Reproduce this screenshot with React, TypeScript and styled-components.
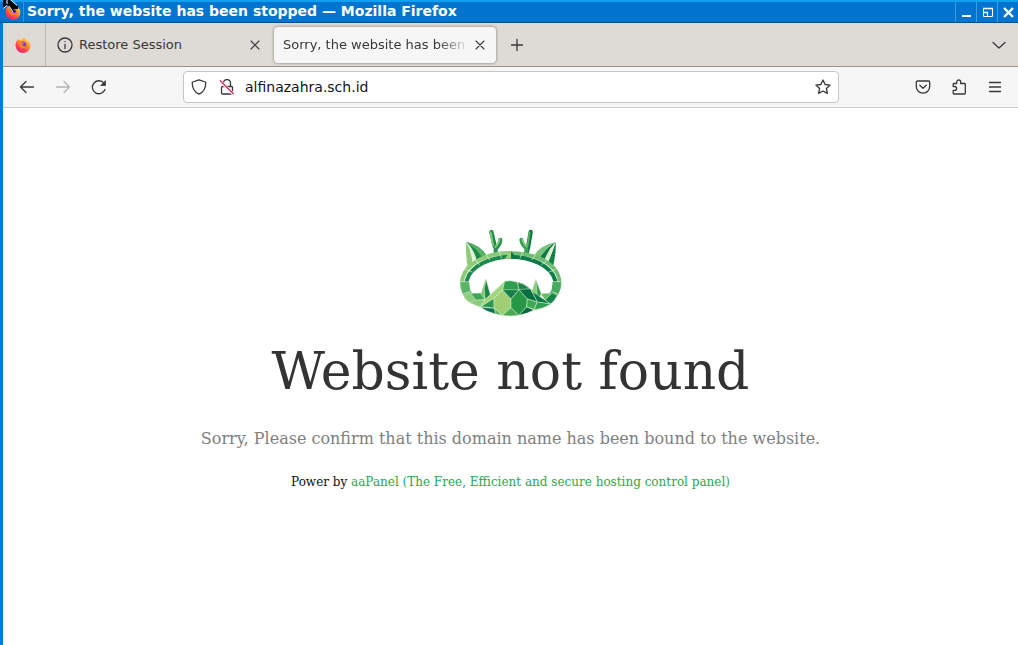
import React from "react";
import styled, { createGlobalStyle } from "styled-components";

const Global = createGlobalStyle`
  * { box-sizing: border-box; }
  body { margin: 0; background: #fff; }
  button { border: 0; padding: 0; background: none; color: inherit; font: inherit; }
  svg { display: block; flex: none; }
`;

const Window = styled.div`
  display: flex;
  flex-direction: column;
  min-height: 100vh;
  font-family: "DejaVu Sans", sans-serif;
  font-size: 14px;
  color: #38373b;
`;

const TitleBar = styled.header`
  display: flex;
  align-items: stretch;
  height: 23px;
  color: #fff;
  background: #0074cf;
  border-top: 2px solid #10a0f0;
  border-bottom: 1px solid #004f93;
`;

const TitleIcon = styled.div`
  display: flex;
  align-items: center;
  justify-content: center;
  width: 24px;
  padding-left: 2px;
  border-right: 1px solid #2b97e0;
`;

const Title = styled.h1`
  flex: 1;
  margin: 0;
  padding-left: 3px;
  font-size: 14px;
  line-height: 18px;
  font-weight: bold;
  font-stretch: normal;
  white-space: nowrap;
  overflow: hidden;
`;

const WindowButton = styled.button`
  display: flex;
  align-items: center;
  justify-content: center;
  width: 21px;
  padding-top: 1px;
  border-left: 1px solid #3d9fe2;
`;

const Frame = styled.div`
  flex: 1;
  display: flex;
  flex-direction: column;
  border-left: 3px solid #0a7ad3;
`;

const TabStrip = styled.div`
  display: flex;
  align-items: center;
  height: 44px;
  padding-right: 1px;
  background: #dedad6;
  border-bottom: 1px solid #9c948c;
`;

const Pinned = styled.div`
  display: flex;
  align-items: center;
  justify-content: center;
  align-self: stretch;
  width: 43px;
  padding-right: 3px;
  border-right: 1px solid #bdb8b3;
`;

const Tab = styled.div<{ $active?: boolean }>`
  display: flex;
  align-items: center;
  gap: ${(p) => (p.$active ? 2 : 6)}px;
  width: ${(p) => (p.$active ? 222 : 228)}px;
  height: 36px;
  padding: ${(p) => (p.$active ? "0 8px 0 9px" : "0 11px")};
  border-radius: 4px;
  background: ${(p) => (p.$active ? "#f6f6f6" : "transparent")};
  box-shadow: ${(p) => (p.$active ? "0 0 3px #77716c" : "none")};
`;

const TabLabel = styled.span<{ $fade?: boolean }>`
  flex: 1;
  min-width: 0;
  overflow: hidden;
  white-space: nowrap;
  font-size: 13px;
  line-height: 20px;
  mask-image: ${(p) =>
    p.$fade ? "linear-gradient(to left, transparent, #000 32px)" : "none"};
`;

const IconButton = styled.button<{ $size?: number; $dim?: boolean }>`
  display: flex;
  align-items: center;
  justify-content: center;
  flex: none;
  width: ${(p) => p.$size ?? 36}px;
  height: ${(p) => p.$size ?? 36}px;
  color: ${(p) => (p.$dim ? "#b3b3b4" : "#38373b")};
`;

const Spacer = styled.div`
  flex: 1;
`;

const Toolbar = styled.nav`
  display: flex;
  align-items: center;
  height: 41px;
  padding: 0 5px 0 6px;
  background: #f6f6f6;
  border-bottom: 1px solid #cccccc;
`;

const AddressArea = styled.div`
  flex: 1;
  padding: 0 66px;
`;

const AddressBar = styled.div`
  display: flex;
  align-items: center;
  height: 32px;
  padding: 0 1px;
  background: #fff;
  border: 1px solid #c6c6c7;
  border-radius: 4px;
`;

const Address = styled.input`
  flex: 1;
  min-width: 0;
  padding: 0 0 0 4px;
  border: 0;
  outline: 0;
  background: none;
  font: inherit;
  color: #15141a;
`;

const Page = styled.main`
  flex: 1;
  display: flex;
  flex-direction: column;
  align-items: center;
  padding: 112px 16px 32px;
  background: #fff;
  font-family: "DejaVu Serif", serif;
  text-align: center;
`;

const Heading = styled.h2`
  margin: 16px 0 0;
  font-size: 52px;
  line-height: 60px;
  font-weight: normal;
  color: #333;
`;

const Message = styled.p`
  margin: 26px 0 0;
  font-size: 16px;
  line-height: 24px;
  color: #808080;
`;

const Credit = styled.p`
  margin: 23px 0 0;
  font-size: 12px;
  line-height: 16px;
  color: #111;
`;

const CreditLink = styled.a`
  color: #2fa44d;
  text-decoration: none;
`;

const Pointer = styled.svg`
  position: absolute;
  top: 0;
  left: 0;
`;

const Line = ({ size = 16, children }: { size?: number; children: React.ReactNode }) => (
  <svg width={size} height={size} viewBox="0 0 16 16" fill="none" stroke="currentColor"
    strokeWidth="1.3" strokeLinecap="round" strokeLinejoin="round" aria-hidden="true">
    {children}
  </svg>
);

const FirefoxLogo = ({ id }: { id: string }) => (
  <svg width="16" height="16" viewBox="0 0 16 16" aria-hidden="true">
    <defs>
      <linearGradient id={id} x1="0.85" y1="0.05" x2="0.25" y2="1">
        <stop offset="0" stopColor="#ffe03d" />
        <stop offset="0.4" stopColor="#ff8f2c" />
        <stop offset="0.7" stopColor="#ff4055" />
        <stop offset="1" stopColor="#e81d77" />
      </linearGradient>
    </defs>
    <path d="M2 3.500 3 1.800l1 1.500 1.700.3C7 2 8.500 1.500 9.300.6c.6 1.700 2.200 2.300 2.900 3.600l.5-1.100c1.900 1.800 2.900 3.500 2.700 5.700A7.400 7.400 0 0 1 .6 8.400C.5 6.500 1 4.800 2 3.500Z" fill={`url(#${id})`} />
    <circle cx="8" cy="7.800" r="3.300" fill="#7542d8" />
    <path d="M3.700 5.300c1.500-.9 3-.6 4 .3l2 .2c-.2.800-1.300 1-1.900 1.300-.7.500-.5 1.600.4 2 1.200.4 2.300-.3 3.200-.2-.7 1.900-3 2.800-5 2.100C4 10.200 3 7.500 3.700 5.300Z" fill="#ff8130" />
  </svg>
);

const Close = () => (
  <Line><path d="m4 4 8 8M12 4l-8 8" strokeWidth="1.1" /></Line>
);

const ears: [string, string][] = [
  ["M49 66Q46 100 53 142L68 128Q64 92 49 66Z", "#8fcb7c"],
  ["M49 66Q64 92 68 128L80 121Q72 88 49 66Z", "#e3f2d3"],
  ["M49 66Q92 76 110 107L80 121Q72 88 49 66Z", "#1d8a4c"],
  ["M49 66Q92 76 110 107L96 112Q80 86 49 66Z", "#57b365"],
  ["M317 66Q319 100 308 143L293 129Q306 100 317 66Z", "#138048"],
  ["M317 66Q306 100 293 129L283 121Q294 90 317 66Z", "#dff0cf"],
  ["M317 66Q294 90 283 121L269 113Q286 85 317 66Z", "#117b47"],
  ["M317 66Q270 76 253 106L269 113Q286 85 317 66Z", "#79c37a"],
];

const muzzle: [string, string][] = [
  ["M41 230 64 218 78 240 92 258 66 250Q49 243 41 230Z", "#8dcc7d"],
  ["M62 220 98 219 105 239 78 241Z", "#3ca556"],
  ["M60 247 78 240 105 239 92 262Q74 256 60 247Z", "#8dcc7d"],
  ["M106 177 93 222 104 238Z", "#7fc76f"],
  ["M108 177 121 224 105 239 103 205Z", "#168749"],
  ["M92 260 105 239 164 184 158 210 132 235Z", "#a2d580"],
  ["M92 260 132 235 132 265 114 262Z", "#2a994f"],
  ["M132 235 158 210 183 237 183 263 157 286 132 265Z", "#9fce74"],
  ["M158 210 170 197 196 197 207 209 183 237Z", "#148047"],
  ["M164 184Q182 179 203 187L207 209H158Z", "#319d4e"],
  ["M183 237 207 209 232 237 230 261 206 286 183 263Z", "#259747"],
  ["M203 187Q226 192 246 212L262 246 232 237 207 209Z", "#067044"],
  ["M203 187Q226 192 238 206L207 209Z", "#1c8449"],
  ["M232 237 262 246 252 268 230 261Z", "#3fa955"],
  ["M257 178 245 215 262 240 264 210Z", "#8bca78"],
  ["M257 178 274 221 262 244 260 205Z", "#2f9d50"],
  ["M246 214 285 240 302 252 262 246Z", "#08794b"],
  ["M272 221 306 219 285 240Z", "#68bb67"],
  ["M285 240 306 219 322 226Q315 242 302 252Z", "#15864b"],
  ["M262 246 302 252Q282 266 252 270Z", "#2da052"],
  ["M92 262 132 265 139 282Q110 276 92 262Z", "#07724a"],
  ["M132 265 157 286 139 282Z", "#46aa55"],
  ["M157 286 183 263 206 286Q182 290 157 286Z", "#4bab53"],
  ["M206 286 230 261 252 270Q232 281 206 286Z", "#096947"],
];

const PanelLogo = () => (
  <svg width="120" height="105" viewBox="3 0 360 315" role="img" aria-label="aaPanel">
    {ears.map(([d, fill]) => <path key={d} d={d} fill={fill} />)}
    <path d="M124 36 134 78" stroke="#1c8a4c" strokeWidth="13" strokeLinecap="round" />
    <path d="M122 37 129 76" stroke="#83c979" strokeWidth="6" strokeLinecap="round" />
    <path d="M151 59Q150 75 137 86V98" fill="none" stroke="#268f4d" strokeWidth="12" strokeLinecap="round" />
    <path d="M149 58Q146 72 136 81" fill="none" stroke="#83c979" strokeWidth="6" strokeLinecap="round" />
    <path d="M242 36 235 78 230 98" fill="none" stroke="#0c7947" strokeWidth="13" strokeLinecap="round" strokeLinejoin="round" />
    <path d="M239 37 233 76" stroke="#61b569" strokeWidth="5" strokeLinecap="round" />
    <path d="M214 59Q216 74 229 84V98" fill="none" stroke="#36a055" strokeWidth="12" strokeLinecap="round" />
    <path d="M217 59Q221 72 230 80" fill="none" stroke="#8acb7c" strokeWidth="5" strokeLinecap="round" />

    <path d="M65 242Q28 214 38 174C50 128 112 99 183 99" fill="none" stroke="#8ccc79" strokeWidth="12" />
    <path d="M78 238Q42 214 51 180C62 139 119 111 183 110" fill="none" stroke="#1b8a4c" strokeWidth="12" />
    <path d="M183 99C254 99 315 128 327 174Q336 214 301 242" fill="none" stroke="#6fbd71" strokeWidth="11" />
    <path d="M183 110C246 111 304 139 315 180Q322 214 288 238" fill="none" stroke="#0d7c48" strokeWidth="12" />
    <path d="M33 185h24l4 29-22 8Q32 204 33 185Z" fill="#5ab467" />
    <path d="M308 186h24q1 18-8 38l-20-8Z" fill="#43aa60" />
    <path d="m39 222 22-8 18 32-13 6Q45 240 39 222Z" fill="#79c374" />
    <g stroke="#d8edc9" strokeWidth="1.500" strokeLinejoin="round">
      {muzzle.map(([d, fill]) => <path key={d} d={d} fill={fill} />)}
    </g>
    <path d="m183 94-20 23 20-2Z" fill="#a3d27b" />
    <path d="m183 94 20 23-20-2Z" fill="#0b7648" />
    <path d="M32 185h25M39 222l22-8M47 148l20 8M76 121l13 14M108 104l12 17M147 95l8 20M218 95l-8 20M257 105l-12 15M289 122l-15 13M317 148l-20 8M332 185h-24M325 222l-20-7" stroke="#e5f3d9" strokeWidth="2" />
  </svg>
);

export default function App() {
  return (
    <>
      <Global />
      <Window>
        <TitleBar>
          <TitleIcon><FirefoxLogo id="title-fox" /></TitleIcon>
          <Title>Sorry, the website has been stopped — Mozilla Firefox</Title>
          <WindowButton aria-label="Minimize">
            <svg width="11" height="11" viewBox="0 0 11 11"><path d="M1 8h9v2H1z" fill="#fff" /></svg>
          </WindowButton>
          <WindowButton aria-label="Restore">
            <svg width="11" height="11" viewBox="0 0 11 11" fill="none" stroke="#fff">
              <path d="M1.500 1.500h9v8h-9zM1.500 5.500h4v4" /><path d="M1 1.500h10M1 5.500h5" strokeWidth="1.500" />
            </svg>
          </WindowButton>
          <WindowButton aria-label="Close">
            <svg width="11" height="11" viewBox="0 0 11 11"><path d="m1 1 9 9m0-9-9 9" stroke="#fff" strokeWidth="2.400" /></svg>
          </WindowButton>
        </TitleBar>
        <Frame>
          <TabStrip>
            <Pinned><FirefoxLogo id="tab-fox" /></Pinned>
            <Tab>
              <Line><circle cx="8" cy="8" r="7" /><path d="M8 7.500v4M8 4.600v.1" /></Line>
              <TabLabel>Restore Session</TabLabel>
              <IconButton $size={16} aria-label="Close Restore Session"><Close /></IconButton>
            </Tab>
            <Tab $active>
              <TabLabel $fade>Sorry, the website has been</TabLabel>
              <IconButton $size={16} aria-label="Close current tab"><Close /></IconButton>
            </Tab>
            <IconButton $size={42} aria-label="New tab">
              <Line><path d="M8 2.500v11M2.500 8h11" /></Line>
            </IconButton>
            <Spacer />
            <IconButton aria-label="List all tabs">
              <Line><path d="m2 5.500 6 5.500 6-5.500" /></Line>
            </IconButton>
          </TabStrip>
          <Toolbar>
            <IconButton aria-label="Back"><Line><path d="M14.500 8h-13M7 2.500 1.500 8 7 13.500" /></Line></IconButton>
            <IconButton $dim aria-label="Forward"><Line><path d="M1.500 8h13M9 2.500 14.500 8 9 13.500" /></Line></IconButton>
            <IconButton aria-label="Reload">
              <Line><path d="M14 10.500A6.500 6.500 0 1 1 13 4.200" /><path d="M14.500 2v4.500H10Z" fill="currentColor" strokeWidth=".8" /></Line>
            </IconButton>
            <AddressArea>
              <AddressBar>
                <IconButton $size={28} aria-label="Tracking protection">
                  <Line><path d="M8 .8 14.300 3c.4.2.5.5.5.9-.2 5.200-2.200 9.100-6.800 11.300C3.400 13 1.400 9.100 1.200 3.900c0-.4.100-.7.500-.9Z" /></Line>
                </IconButton>
                <IconButton $size={28} aria-label="Connection not secure">
                  <Line>
                    <path d="M4.500 7V4a3.500 3.500 0 0 1 7 0v3M3.500 7.500h9c.7 0 1 .3 1 1v5.500c0 .7-.3 1-1 1h-9c-.7 0-1-.3-1-1V8.500c0-.7.3-1 1-1Z" />
                    <path d="m1.300 2.300 13 12.700" stroke="#fff" strokeWidth="3" />
                    <path d="m1.300 1.800 13 13" stroke="#e22850" />
                  </Line>
                </IconButton>
                <Address aria-label="Address" defaultValue="alfinazahra.sch.id" spellCheck={false} />
                <IconButton $size={28} aria-label="Bookmark this page">
                  <Line><path d="m8 1 2.100 4.500 5 .6-3.700 3.400 1 4.900L8 12l-4.400 2.400 1-4.900L.9 6.100l5-.6Z" /></Line>
                </IconButton>
              </AddressBar>
            </AddressArea>
            <IconButton aria-label="Save to Pocket">
              <Line><path d="M2.500 2h11c.7 0 1.200.5 1.200 1.200v4.300a6.700 6.700 0 0 1-13.400 0V3.200C1.300 2.500 1.800 2 2.500 2ZM4.800 6.300 8 9.300l3.200-3" /></Line>
            </IconButton>
            <IconButton aria-label="Extensions">
              <Line><path d="M5.700 4.500V3a2 2 0 0 1 4 0v1.500h3.800c.5 0 .8.3.8.8v8.900c0 .5-.3.8-.8.8H3c-.5 0-.8-.3-.8-.8v-2.900h1.500a1.900 1.900 0 0 0 0-3.800H2.200V5.300c0-.5.3-.8.8-.8Z" /></Line>
            </IconButton>
            <IconButton aria-label="Open application menu">
              <Line><path d="M2.500 3.500h11M2.500 8h11M2.500 12.500h11" /></Line>
            </IconButton>
          </Toolbar>
          <Page>
            <PanelLogo />
            <Heading>Website not found</Heading>
            <Message>Sorry, Please confirm that this domain name has been bound to the website.</Message>
            <Credit>
              Power by <CreditLink href="#">aaPanel (The Free, Efficient and secure hosting control panel)</CreditLink>
            </Credit>
          </Page>
        </Frame>
      </Window>
      <Pointer width="20" height="13" viewBox="0 0 20 13" aria-hidden="true">
        <path d="M3 0h7l8 6v3h-5l3 3h-4L8 5 3 9Z" fill="#080808" />
        <path d="M7 0v4M11 0l6 5.500M3 8.500l4-3M9 6l4 6" fill="none" stroke="#fff" strokeWidth="1" />
      </Pointer>
    </>
  );
}
